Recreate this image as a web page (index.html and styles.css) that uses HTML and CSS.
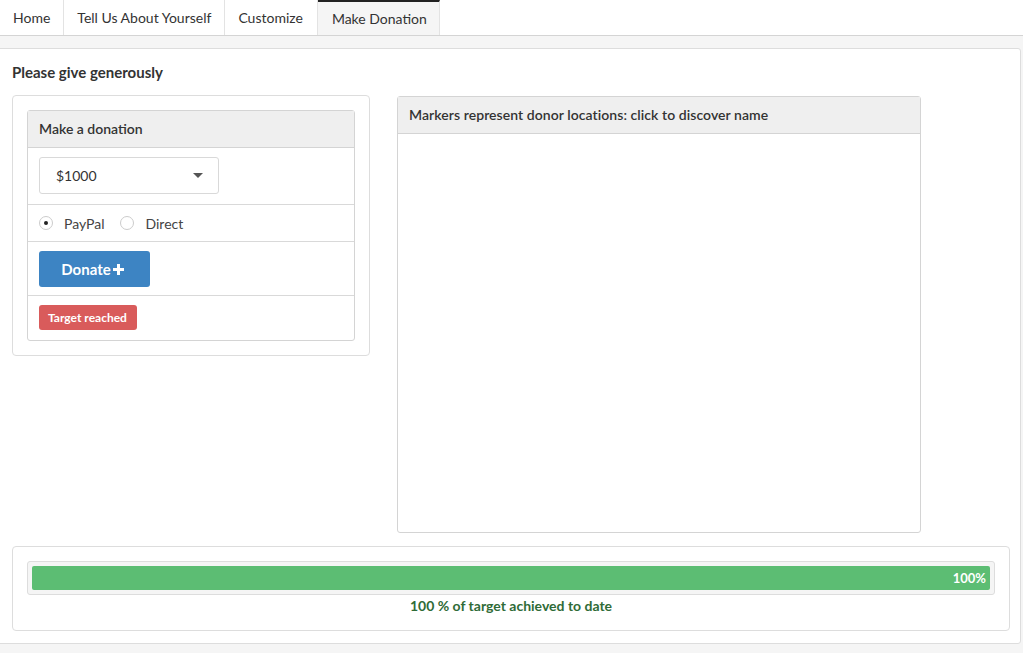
FILE: index.html
```html
<!DOCTYPE html>
<html>
<head>
<meta charset="utf-8">
<link rel="stylesheet" href="styles.css">
</head>
<body>
<nav class="tabs">
  <div class="tab">Home</div>
  <div class="tab">Tell Us About Yourself</div>
  <div class="tab">Customize</div>
  <div class="tab active">Make Donation</div>
</nav>
<div class="strip"></div>
<main class="page">
  <h4 class="title">Please give generously</h4>
  <div class="row">
    <div class="well left">
      <div class="panel">
        <div class="panel-head">Make a donation</div>
        <div class="item select-row">
          <div class="select"><span>$1000</span><span class="caret"></span></div>
        </div>
        <div class="item radios">
          <label class="radio"><span class="dot on"></span>PayPal</label>
          <label class="radio"><span class="dot"></span>Direct</label>
        </div>
        <div class="item btn-row">
          <button class="btn">Donate<svg class="plus" width="11" height="11" viewBox="0 0 11 11"><path d="M4 0h3v4h4v3H7v4H4V7H0V4h4z" fill="#fff"/></svg></button>
        </div>
        <div class="item badge-row">
          <span class="badge">Target reached</span>
        </div>
      </div>
    </div>
    <div class="panel map">
      <div class="panel-head">Markers represent donor locations: click to discover name</div>
      <div class="map-body"></div>
    </div>
  </div>
  <div class="well bottom">
    <div class="progress"><div class="bar" style="width:100%">100%</div></div>
    <div class="caption">100 % of target achieved to date</div>
  </div>
</main>
</body>
</html>
```
FILE: styles.css
```css
* { box-sizing: border-box; }
html, body { margin: 0; padding: 0; }
body {
  font-family: Lato, "Open Sans", sans-serif;
  font-size: 14px;
  color: #333;
  background: #f5f5f5;
  width: 1023px;
  height: 653px;
  overflow: hidden;
}
.tabs {
  display: flex;
  height: 36px;
  background: #fff;
  border-bottom: 1px solid #d4d4d4;
}
.tab {
  padding: 0 13px;
  line-height: 35px;
  border-right: 1px solid #e3e3e3;
  color: #333;
}
.tab:nth-child(3) { padding-right: 14px; }
.tab.active {
  background: #f5f5f5;
  border-top: 2px solid #222;
  line-height: 33px;
  padding: 0 12px 0 14px;
}
.strip { height: 12px; }
.page {
  background: #fff;
  border: 1px solid #ddd;
  border-radius: 0 3px 3px 0;
  margin-left: -1px;
  width: 1022px;
  padding: 12px 11px 12px 12px;
}
.title {
  margin: 2px 0 14px;
  font-size: 15px;
  font-weight: 700;
  line-height: 18px;
}
.row {
  display: flex;
  align-items: flex-start;
  gap: 27px;
}
.well {
  border: 1px solid #ddd;
  border-radius: 4px;
  padding: 14px;
  background: #fff;
}
.left { width: 358px; }
.panel {
  border: 1px solid #d4d4d4;
  border-radius: 3px;
  background: #fff;
}
.panel-head {
  background: #efefef;
  border-bottom: 1px solid #d4d4d4;
  height: 37px;
  line-height: 35px;
  padding: 0 11px;
  font-weight: 600;
}
.map .panel-head { letter-spacing: 0.06px; }
.item { border-bottom: 1px solid #d9d9d9; padding: 9px 11px; }
.item:last-child { border-bottom: 0; }
.select-row { padding: 9px 11px 10px; }
.select {
  width: 180px;
  height: 37px;
  border: 1px solid #d9d9d9;
  border-radius: 3px;
  display: flex;
  align-items: center;
  justify-content: space-between;
  padding: 0 15px 0 16px;
}
.caret {
  width: 0; height: 0;
  border-left: 5px solid transparent;
  border-right: 5px solid transparent;
  border-top: 5px solid #555;
}
.radios { display: flex; gap: 16px; height: 37px; padding-top: 0; padding-bottom: 0; align-items: center; }
.radio { display: flex; align-items: center; gap: 11px; color: #444; }
.dot {
  width: 14px; height: 14px;
  border: 1px solid #ccc;
  border-radius: 50%;
  display: inline-block;
  position: relative;
}
.dot.on::after {
  content: "";
  position: absolute;
  left: 4px; top: 4px;
  width: 4px; height: 4px;
  border-radius: 50%;
  background: #222;
}
.btn-row { padding: 9px 11px 8px; }
.btn {
  width: 111px;
  height: 36px;
  background: #3d84c3;
  border: 0;
  border-radius: 3px;
  color: #fff;
  font-family: Lato, sans-serif;
  font-size: 15px;
  font-weight: 700;
  display: flex;
  align-items: center;
  justify-content: center;
  gap: 2px;
  padding: 0 4px 0 0;
}
.badge-row { padding: 9px 11px 10px; }
.badge {
  display: inline-block;
  background: #d95b5b;
  color: #fff;
  font-size: 12px;
  font-weight: 700;
  height: 25px;
  line-height: 25px;
  padding: 0 10px 0 9px;
  border-radius: 3px;
}
.map { width: 524px; margin-top: 1px; }
.map-body { height: 398px; }
.bottom { margin-top: 13px; width: 998px; padding: 14px 14px 15px; }
.progress {
  background: #f5f5f5;
  border: 1px solid #ddd;
  border-radius: 3px;
  padding: 4px;
  height: 34px;
}
.bar {
  height: 24px;
  background: #5cbd73;
  border-radius: 2px;
  color: #fff;
  font-size: 13px;
  font-weight: 700;
  text-align: right;
  line-height: 24px;
  padding-right: 4px;
}
.caption {
  text-align: center;
  color: #2f6b37;
  font-weight: 700;
  margin-top: 2px;
  line-height: 18px;
}
```
